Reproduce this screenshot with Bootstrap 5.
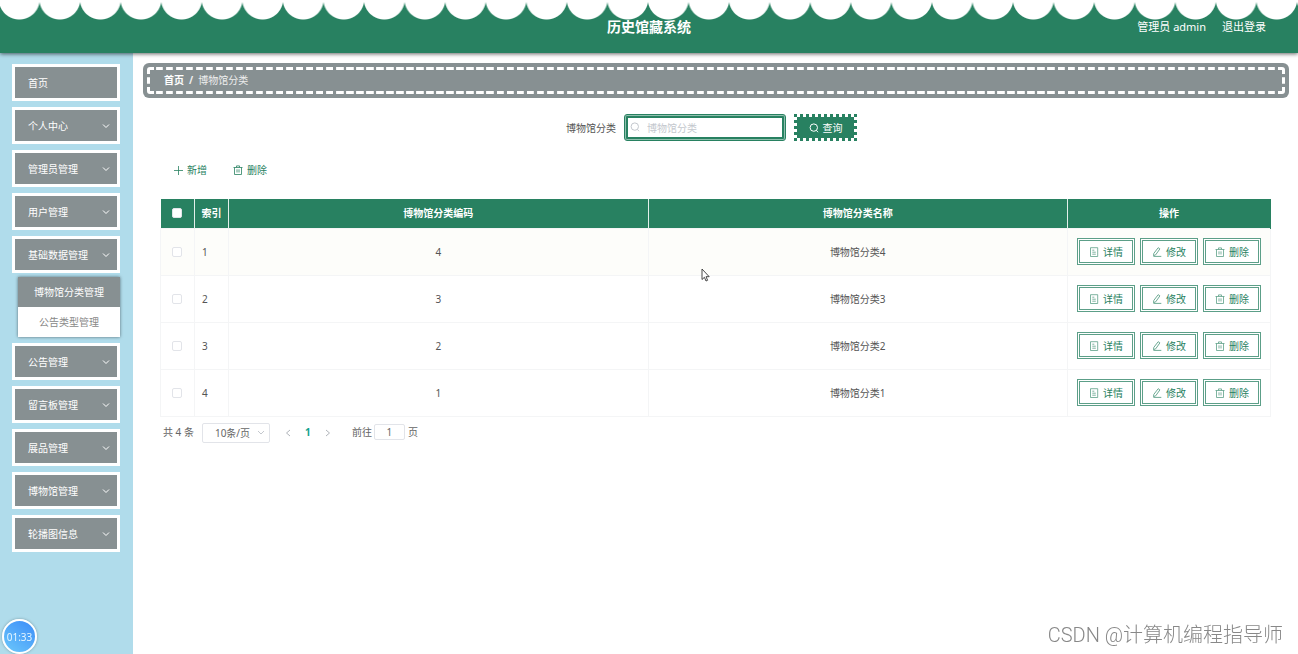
<!DOCTYPE html>
<html lang="zh-CN">
<head>
<meta charset="utf-8">
<meta name="viewport" content="width=device-width, initial-scale=1">
<title>历史馆藏系统</title>
<link href="https://cdn.jsdelivr.net/npm/bootstrap@5.3.0/dist/css/bootstrap.min.css" rel="stylesheet">
<style>
:root{--brand:#288161;--slate:#879092;--sky:#b0dceb}
body{font-family:"Noto Sans","Noto Sans CJK SC",sans-serif;font-size:10px;line-height:16px;color:#555;background:#fff}
svg{fill:none;stroke:currentColor;flex:none}
button,input,select{font:inherit;color:inherit}
.topbar{height:53px;color:#fff;font-size:11px;box-shadow:0 1px 4px rgba(0,0,0,.6);z-index:2;
  background:radial-gradient(circle at 50% -1px,#fff 20px,transparent 21px) -1px 0/41px 21px,var(--brand);
  background-repeat:round no-repeat,repeat}
.topbar h1{font-size:14px;line-height:20px;font-weight:700}
.topbar a{color:#fff;text-decoration:none}
.side{width:133px;flex:none;background:var(--sky);padding:11px 13px 0 12px}
.side ul{gap:6px}
.side-btn{height:37px;width:100%;border:3px solid #fff;background:var(--slate);color:#fff;padding:0 7px 0 13px;border-radius:0;text-decoration:none}
.submenu{margin:4px 0 0 6px;box-shadow:0 0 3px rgba(0,0,0,.5);background:#fff;text-align:center}
.submenu a{display:block;height:30px;line-height:30px;color:#888;text-decoration:none}
.submenu a.on{background:var(--slate);color:#fff}
.content-area{padding:10px 9px 0 10px;min-width:0}
.crumbs{background:var(--slate);border-radius:6px;padding:4px}
.crumbs ol{height:27px;padding:0 17px 1px;gap:5px;color:#eee;position:relative}
.crumbs ol::before{content:"";position:absolute;inset:0;pointer-events:none;border:8px solid transparent;
  border-image:url("data:image/svg+xml,%3Csvg xmlns='http://www.w3.org/2000/svg' width='26' height='26'%3E%3Cg fill='%23fff'%3E%3Cpath d='M0 7V3Q0 0 3 0H7V3H3V7zM19 0h4q3 0 3 3v4h-3V3h-4zM0 19h3v4h4v3H3q-3 0-3-3zM23 19h3v4q0 3-3 3h-4v-3h4z'/%3E%3Cpath d='M9 0h7v3H9zM9 23h7v3H9zM0 10h3v6H0zM23 10h3v6h-3z'/%3E%3C/g%3E%3C/svg%3E") 8 round}
.crumbs a{color:#fff;font-weight:700;text-decoration:none}
.panel-body{padding:16px 18px 0 17px}
.search-form{gap:8px;padding-right:8px}
.search-box{position:relative;width:162px}
.search-box input{width:100%;height:27px;border:1px solid var(--brand);border-radius:3px;padding:0 8px 0 22px;
  box-shadow:inset 0 0 0 1px #8fbfae,inset 0 0 0 3px var(--brand);outline:0}
.search-box input::placeholder{color:#c4c8ce}
.search-box svg{position:absolute;left:6px;top:8px;color:#c4c8ce}
.btn-query{height:27px;width:63px;border:3px dotted var(--brand);background:var(--brand);background-clip:padding-box;color:#fff;padding:0}
.tools{margin:20px 0 20px 14px;gap:26px}
.tools button{border:0;background:none;color:var(--brand);padding:0;height:18px}
.data{table-layout:fixed;margin:0;width:100%;border-collapse:collapse;color:#555}
.data th{background:var(--brand);color:#fff;height:29px;padding:0;text-align:center;font-weight:700;border-right:1px solid #e3efeb}
.data th:last-child{border-right-color:var(--brand)}
.data td{height:47px;padding:0;text-align:center;vertical-align:middle;border:1px solid #f4f5f6}
.data tbody tr:first-child td{background:#fdfdfa}
.data .idx{text-align:left;padding-left:7px}
.data input{appearance:none;width:10px;height:10px;border:1px solid #e2e4e9;border-radius:2px;background:#fff;display:block;margin:0 auto}
.data td input{margin-left:11px}
.act{width:58px;height:27px;border:3px double #5c9f88;background:#fff;color:var(--brand);padding:0}
.act svg{opacity:.75}
.pager{padding:4px 0 0 3px;color:#666}
.pager select{appearance:none;width:68px;height:20px;border:1px solid #e2e4e9;border-radius:2px;padding:0 0 0 12px;margin:2px 14px 0 8px;
  background:#fff url("data:image/svg+xml,%3Csvg xmlns='http://www.w3.org/2000/svg' width='8' height='6' fill='none' stroke='%23c4c8ce'%3E%3Cpath d='M1 1l3 3 3-3'/%3E%3C/svg%3E") no-repeat right 4px center}
.pager button{border:0;background:none;padding:0;width:8px;color:#b0b4ba;line-height:16px}
.pager .steps{margin-right:16px}
.pager button.now{width:32px;color:#13a38c;font-weight:700}
.pager input{width:31px;height:16px;border:1px solid #e2e4e9;border-radius:2px;text-align:center;padding:0;margin:0 3px 0 2px}
.clock{position:fixed;left:2px;bottom:0;width:35px;height:35px;border:2px solid #fff;border-radius:50%;color:#e4f5ff;
  background:linear-gradient(35deg,#6cc8fb,#3b8cf8);box-shadow:0 0 3px rgba(0,0,0,.3)}
.credit{position:fixed;right:15px;bottom:6px;font:20px/26px Roboto,"Noto Sans CJK SC",sans-serif;font-weight:300;color:#888;text-shadow:-1px -1px 0 #fff}
.pointer{position:fixed;left:701px;top:268px}
</style>
</head>
<body>
<svg width="0" height="0" class="position-absolute" aria-hidden="true">
  <symbol id="down" viewBox="0 0 8 8"><path d="M1 2.5l3 3 3-3"/></symbol>
  <symbol id="search" viewBox="0 0 10 10"><circle cx="4.8" cy="4.6" r="3.7"/><path d="M7.4 7.4L9 9.2"/></symbol>
  <symbol id="trash" viewBox="0 0 10 10"><path d="M.5 2.5h9M3.500 2.300V.9h3v1.400M1.500 2.500v7h7v-7M4 4.300v3.200M6 4.300v3.200" stroke-width=".8"/></symbol>
  <symbol id="doc" viewBox="0 0 10 10"><path d="M1.500.7h7.200v8.800H1.500zM3.300 3.200h2M3.300 5.200h3.500M3.300 7.200h3.500" stroke-width=".8"/></symbol>
  <symbol id="edit" viewBox="0 0 10 10"><path d="M6.200.7l1.700 1.200-4.200 5.900-2.200.9.300-2.300zM1.500 9.400h7.800" stroke-width=".9"/></symbol>
</svg>
<div class="d-flex flex-column min-vh-100">
  <header class="topbar position-relative d-flex align-items-center">
    <h1 class="m-0 w-100 text-center">历史馆藏系统</h1>
    <nav class="position-absolute end-0 d-flex gap-3 me-4 pe-2"><span>管理员 admin</span><a href="#">退出登录</a></nav>
  </header>
  <div class="d-flex flex-grow-1">
    <aside class="side">
      <ul class="list-unstyled d-flex flex-column m-0">
        <li><a href="#" class="side-btn d-flex align-items-center">首页</a></li>
        <li><button class="side-btn d-flex align-items-center justify-content-between">个人中心<svg width="8" height="8"><use href="#down"/></svg></button></li>
        <li><button class="side-btn d-flex align-items-center justify-content-between">管理员管理<svg width="8" height="8"><use href="#down"/></svg></button></li>
        <li><button class="side-btn d-flex align-items-center justify-content-between">用户管理<svg width="8" height="8"><use href="#down"/></svg></button></li>
        <li><button class="side-btn d-flex align-items-center justify-content-between">基础数据管理<svg width="8" height="8"><use href="#down"/></svg></button>
          <div class="submenu"><a href="#" class="on">博物馆分类管理</a><a href="#">公告类型管理</a></div></li>
        <li><button class="side-btn d-flex align-items-center justify-content-between">公告管理<svg width="8" height="8"><use href="#down"/></svg></button></li>
        <li><button class="side-btn d-flex align-items-center justify-content-between">留言板管理<svg width="8" height="8"><use href="#down"/></svg></button></li>
        <li><button class="side-btn d-flex align-items-center justify-content-between">展品管理<svg width="8" height="8"><use href="#down"/></svg></button></li>
        <li><button class="side-btn d-flex align-items-center justify-content-between">博物馆管理<svg width="8" height="8"><use href="#down"/></svg></button></li>
        <li><button class="side-btn d-flex align-items-center justify-content-between">轮播图信息<svg width="8" height="8"><use href="#down"/></svg></button></li>
      </ul>
    </aside>
    <main class="content-area flex-grow-1">
      <nav class="crumbs"><ol class="list-unstyled d-flex align-items-center m-0"><li><a href="#">首页</a></li><li class="fw-bold">/</li><li>博物馆分类</li></ol></nav>
      <div class="panel-body">
        <form class="search-form d-flex align-items-center justify-content-center">
          <label for="kind">博物馆分类</label>
          <div class="search-box"><svg width="10" height="10"><use href="#search"/></svg><input id="kind" type="text" placeholder="博物馆分类"></div>
          <button type="button" class="btn-query d-flex align-items-center justify-content-center gap-1"><svg width="10" height="10"><use href="#search"/></svg>查询</button>
        </form>
        <div class="tools d-flex">
          <button class="d-flex align-items-center gap-1"><svg width="9" height="9"><path d="M4.5 0v9M0 4.5h9" stroke-width=".8"/></svg>新增</button>
          <button class="d-flex align-items-center gap-1"><svg width="10" height="10"><use href="#trash"/></svg>删除</button>
        </div>
        <table class="data">
          <colgroup><col style="width:34px"><col style="width:34px"><col><col><col style="width:203px"></colgroup>
          <thead><tr><th><input type="checkbox" aria-label="全选"></th><th>索引</th><th>博物馆分类编码</th><th>博物馆分类名称</th><th>操作</th></tr></thead>
          <tbody id="rows"></tbody>
        </table>
        <div class="pager d-flex align-items-center">
          <span>共 4 条</span>
          <select aria-label="每页条数"><option>10条/页</option></select>
          <div class="steps d-flex"><button aria-label="上一页"><svg width="6" height="8"><path d="M5 1L1.500 4 5 7"/></svg></button><button class="now">1</button><button aria-label="下一页"><svg width="6" height="8"><path d="M1 1l3.500 3L1 7"/></svg></button></div>
          <label for="jump" class="ps-1">前往</label><input id="jump" type="text" value="1"><span>页</span>
        </div>
      </div>
    </main>
  </div>
</div>
<div class="clock d-flex align-items-center justify-content-center">01:33</div>
<div class="credit">CSDN @计算机编程指导师</div>
<svg class="pointer" width="9" height="14" aria-hidden="true"><path d="M1 1v10.500l2.400-2.200 1.600 3.700 1.600-.7L5 8.700h3.200z" fill="#fff" stroke="#333" stroke-width=".9"/></svg>
<script src="https://cdn.jsdelivr.net/npm/bootstrap@5.3.0/dist/js/bootstrap.bundle.min.js"></script>
<script>
const act=(icon,text)=>`<button class="act d-flex align-items-center justify-content-center gap-1"><svg width="10" height="10"><use href="#${icon}"/></svg>${text}</button>`;
document.getElementById('rows').innerHTML=[4,3,2,1].map((n,i)=>`<tr><td><input type="checkbox" aria-label="选择第${i+1}行"></td><td class="idx">${i+1}</td><td>${n}</td><td>博物馆分类${n}</td><td><div class="d-flex justify-content-center" style="gap:5px">${act('doc','详情')}${act('edit','修改')}${act('trash','删除')}</div></td></tr>`).join('');
</script>
</body>
</html>
